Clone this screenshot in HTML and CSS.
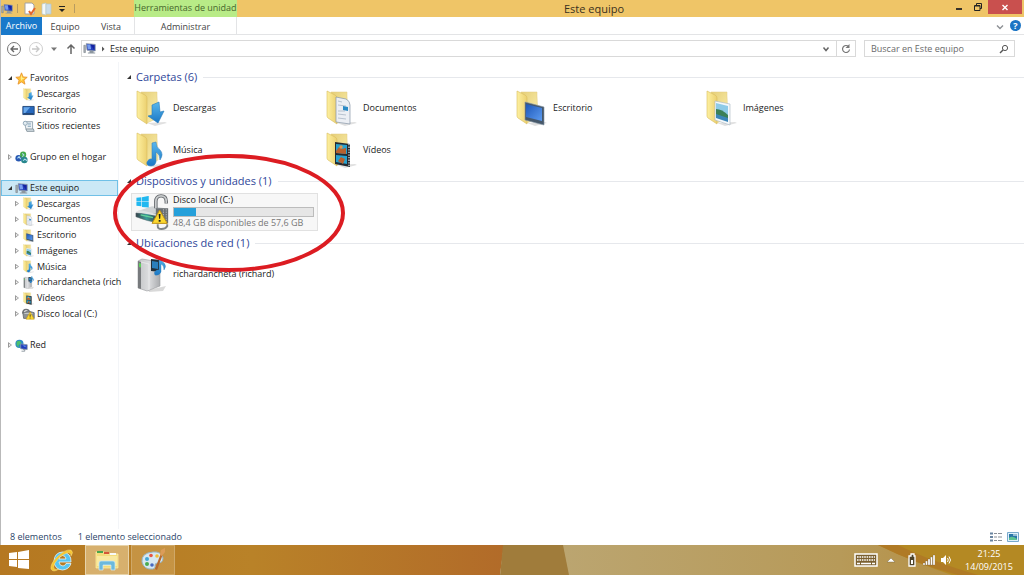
FILE: index.html
```html
<!DOCTYPE html>
<html lang="es">
<head>
<meta charset="utf-8">
<title>Este equipo</title>
<link rel="stylesheet" href="styles.css">
</head>
<body>
<svg class="sprite" aria-hidden="true">
  <defs>
    <linearGradient id="gFront" x1="0" y1="0" x2="1" y2="0"><stop offset="0" stop-color="#fdf0a0"/><stop offset="1" stop-color="#ecd070"/></linearGradient>
    <linearGradient id="gBack" x1="0" y1="0" x2="1" y2="1"><stop offset="0" stop-color="#e6cf78"/><stop offset="1" stop-color="#fbefaf"/></linearGradient>
    <linearGradient id="gBlue" x1="0" y1="0" x2="0" y2="1"><stop offset="0" stop-color="#58b8ee"/><stop offset="1" stop-color="#1a77c4"/></linearGradient>
    <linearGradient id="gScreen" x1="0" y1="0" x2="1" y2="1"><stop offset="0" stop-color="#1d57b8"/><stop offset="1" stop-color="#5d9cf0"/></linearGradient>
    <linearGradient id="gMetal" x1="0" y1="0" x2="1" y2="0"><stop offset="0" stop-color="#c3c5c7"/><stop offset=".5" stop-color="#dcdddf"/><stop offset="1" stop-color="#a9abae"/></linearGradient>
    <linearGradient id="gDrive" x1="0" y1="0" x2="1" y2="0"><stop offset="0" stop-color="#34424a"/><stop offset=".5" stop-color="#3c9c98"/><stop offset="1" stop-color="#3a474f"/></linearGradient>
  </defs>
  <symbol id="folder" viewBox="0 0 32 36">
    <path d="M12 33l18-1 2 1-12 3z" fill="#000" opacity=".12"/>
    <path d="M6 2h16v4l1 22-11 5z" fill="url(#gBack)" stroke="#e0cb80" stroke-width=".5"/>
    <path d="M2 1l8 4q2 1 2 3v26l-9-6q-1-1-1-2z" fill="url(#gFront)" stroke="#d8bc5c" stroke-width=".6"/>
  </symbol>
  <symbol id="down" viewBox="0 0 32 36"><use href="#folder"/><path d="M17 15l7-3 1 10 4-1-6 12-10-7 4-1z" fill="url(#gBlue)" stroke="#2379b8" stroke-width=".6"/></symbol>
  <symbol id="docs" viewBox="0 0 32 36"><use href="#folder"/><path d="M11 7l10 2q4 2 4 6v19l-14-2z" fill="#eceff4" stroke="#8796a8" stroke-width=".7"/><path d="M13 11l4 1m-4 3l8 1m-8 8l8 1m-8 3l8 1m-8-8h7" stroke="#a9b6c5" stroke-width=".8"/><path d="M18 16l5 1v4l-5-1z" fill="#2c8bc6"/></symbol>
  <symbol id="desk" viewBox="0 0 32 36"><use href="#folder"/><path d="M10 12l19 5v18l-19-5z" fill="#46586a" stroke="#8496a5" stroke-width=".6"/><path d="M11 14l16 4v13l-16-4z" fill="url(#gScreen)"/></symbol>
  <symbol id="pics" viewBox="0 0 32 36"><use href="#folder"/><path d="M10 11l15 3v21l-15-5z" fill="#f4f8fb" stroke="#a8b7c1" stroke-width=".6"/><path d="M11 13l12 3v15l-12-4z" fill="#8ecbe8"/><path d="M11 19q6 0 12 6v5l-12-4z" fill="#3b8058"/><path d="M11 24l12 4v4l-12-4z" fill="#3b86b9"/></symbol>
  <symbol id="music" viewBox="0 0 32 36"><use href="#folder"/><path d="M17 11l4-1q0 5 4 8 4 4 0 10 0-6-4-8v10q-1 4-5 4-5 0-4-4 2-4 5-3z" fill="url(#gBlue)" stroke="#3a83bd" stroke-width=".6"/></symbol>
  <symbol id="video" viewBox="0 0 32 36"><use href="#folder"/><path d="M10 10l15 2v23l-15-3z" fill="#242a31"/><path d="M11 12l11 1v9l-11-1zm0 11l11 1v8l-11-2z" fill="#27a2cf"/><path d="M11 19l3-4 3 2 4-1v6l-10-1zm2 10l3-4 4 2-2 5z" fill="#b8602d"/><circle cx="16" cy="15" r="1.7" fill="#e0964e"/><path d="M24 12v22" stroke="#d7dde1" stroke-width="1.3" stroke-dasharray="1.3 1.3"/></symbol>
  <symbol id="win" viewBox="0 0 20 20"><path d="M0 3l8-1v7H0zM9 2l11-2v9H9zM0 10h8v7l-8-1zM9 10h11v9L9 18z" fill="currentColor"/></symbol>
  <symbol id="drive" viewBox="0 0 38 38">
    <path d="M3 18l15-5 14 2-10 7z" fill="#cfd3d5"/><path d="M1 20l22 1v9q-9-1-22-6z" fill="url(#gDrive)" stroke="#59666d" stroke-width=".6"/><path d="M1 19l4-2 18 4-1 2z" fill="#dfe3e4"/><path d="M6 22l13 3" stroke="#62d598" stroke-width="1.4"/>
    <g color="#21b8f0"><use href="#win" x="1" y="2" width="14" height="13"/></g>
    <path d="M22 15V8q0-6 5.500-6T33 8v2" fill="none" stroke="#606468" stroke-width="3.600"/><path d="M22 15V8q0-6 5.500-6T33 8v2" fill="none" stroke="#c8cbcd" stroke-width="1.800"/>
    <rect x="22" y="15" width="13" height="16" fill="#6b7074"/><path d="M33 16v14M30 16v14" stroke="#b3b7b9" stroke-dasharray="1.500 1"/>
    <path d="M24 32v2q0 3 4 3t6-3v-2" fill="none" stroke="#7f8588" stroke-width="2"/>
    <path d="M26 17l8 14H18z" fill="#fbd82f" stroke="#bd8f10"/><path d="M25 21h2l-.4 5h-1.200zM25 27.500h2v1.800h-2z" fill="#222"/>
  </symbol>
  <symbol id="lockdrive" viewBox="0 0 16 16"><path d="M1 8q0-5 4-5t4 4" fill="none" stroke="#707477" stroke-width="2"/><path d="M1 7l7-2 7 2v7H2z" fill="#8d9295" stroke="#63686b"/><path d="M3 8h10" stroke="#d0d4d5"/><path d="M10 6l5 9H5z" fill="#fbd82f" stroke="#c69a18" stroke-width=".7"/><path d="M10 9v3m0 1v1" stroke="#222"/></symbol>
  <symbol id="server" viewBox="0 0 32 36"><path d="M13 34l18-4-3 5-14 1z" fill="#000" opacity=".15"/><path d="M3 5l4-2 18 3v24L12 35l-9-3z" fill="url(#gMetal)" stroke="#989b9e" stroke-width=".6"/><path d="M3 5l3 1v27l-3-1z" fill="#777a7d"/><path d="M4 7l2 .5v4L4 11z" fill="#60d15d"/><path d="M6 6l8 2v26" fill="none" stroke="#eff0f1" stroke-width=".7"/><path d="M16 3l10 1v12l-10-1z" fill="#23303a"/><path d="M17 5l6 1v7l-6-1z" fill="#2b7fbb"/><path d="M26 1q0 4 3 6 3 3 0 7 0-5-3-6v8q-2 4-6 3-2-3 2-5h2V1z" fill="url(#gBlue)" stroke="#347eb7" stroke-width=".4"/></symbol>
  <symbol id="pc" viewBox="0 0 16 16"><path d="M1 4h2v9H1z" fill="#a9b0b7" stroke="#6a7178" stroke-width=".6"/><path d="M4 2l11 1v8L5 10z" fill="#233fbb" stroke="#8993a0"/><path d="M9 3l5 1v6z" fill="#1522a0"/><path d="M5 3l4 0 1 6-4 0z" fill="#779df0"/><path d="M8 11h5v2h2v1H6v-1h2z" fill="#8d979f"/></symbol>
  <symbol id="star" viewBox="0 0 16 16"><path d="M8 1l2 5 5 .5-4 3.500 1.300 5L8 12.300 3.700 15 5 10 1 6.500 6 6z" fill="#ffc437" stroke="#e8902a"/><path d="M8 3l1 4 3 1-3 1-1 2-1-3z" fill="#fff08a"/></symbol>
  <symbol id="screen" viewBox="0 0 16 16"><path d="M1 3h14v10H1z" fill="#2768bd" stroke="#173b6e"/><path d="M2 4h8L4 11H2z" fill="#6aa9eb"/><path d="M2 12h12" stroke="#20344f"/></symbol>
  <symbol id="recent" viewBox="0 0 16 16"><path d="M3 2h10v10H5z" fill="#eef2f5" stroke="#899ba8"/><circle cx="4" cy="4" r="2.500" fill="#e4edf2" stroke="#849eb0"/><path d="M7 4h4M7 6h4M7 8h4" stroke="#86a6bd"/><path d="M5 11h9l1 3H6z" fill="#cfdae0" stroke="#819099"/></symbol>
  <symbol id="home" viewBox="0 0 16 16"><circle cx="4.500" cy="9" r="4" fill="#2858b2"/><circle cx="10" cy="4.500" r="3.800" fill="#44aa4b"/><circle cx="11.500" cy="11" r="4" fill="#28878d"/><path d="M3 9l2-2 2 3M9 3l2 2-2 2M10 12l2-2 3 2" fill="none" stroke="#b1dcf4" stroke-width="1.300"/></symbol>
  <symbol id="net" viewBox="0 0 16 16"><circle cx="5.500" cy="6" r="5" fill="#2a89c7"/><path d="M2 3l4-1 2 3-4 3 2 3-4-3z" fill="#4dc06c"/><path d="M7 6l8 1v6l-8-1z" fill="#1e3dbc" stroke="#8796a5"/><path d="M9 8h4v2z" fill="#719bf1"/><path d="M10 13h2v2H8" fill="none" stroke="#7b8891"/></symbol>
  <symbol id="keyb" viewBox="0 0 24 14"><rect x="1" y="1" width="22" height="12" fill="#7b6030" stroke="#fff" stroke-width="1.500"/><path d="M3 4h18M3 7h18" stroke="#fff" stroke-width="1.600" stroke-dasharray="1.600 .8"/><path d="M3 10.500h3m1 0h10m1 0h3" stroke="#fff" stroke-width="1.500"/></symbol>
</svg>

<div class="window">
  <header class="titlebar">
    <div class="quick">
      <svg class="i12"><use href="#pc"/></svg><span class="sep"></span>
      <button aria-label="Propiedades"><svg viewBox="0 0 12 14" class="qi"><path d="M1 1h7l2 2v9H1z" fill="#fff" stroke="#a3a3a3"/><path d="M5 9l2 3 4-6" fill="none" stroke="#e4662b" stroke-width="2"/></svg></button>
      <button aria-label="Nueva carpeta"><svg viewBox="0 0 12 14" class="qi"><path d="M2 2l4-1v12l-4-1z" fill="#f4f8f8" stroke="#b5c7ca" stroke-width=".7"/><path d="M6 2h5v10H6z" fill="#c9dcea" stroke="#b5c7ca" stroke-width=".7"/></svg></button>
      <button aria-label="Personalizar"><svg viewBox="0 0 8 8" class="i8"><path d="M1 1.500h6" stroke="#222"/><path d="M1 4h6L4 7z" fill="#222"/></svg></button><span class="sep"></span>
    </div>
    <div class="tooltab">Herramientas de unidad</div>
    <h1>Este equipo</h1>
    <button class="wmin" aria-label="Minimizar"><svg viewBox="0 0 10 10" class="i10"><path d="M2 7h6" stroke="#222" stroke-width="1.800"/></svg></button>
    <button class="wmax" aria-label="Restaurar"><svg viewBox="0 0 10 10" class="i10"><path d="M3.500 3V1.500h5v5H7M1.500 3.500H7v5H1.500zM2 4h5" fill="none" stroke="#222"/></svg></button>
    <button class="wclose" aria-label="Cerrar"><svg viewBox="0 0 10 10" class="i10"><path d="M2.500 3l5 5m0-5l-5 5" stroke="#fff" stroke-width="1.400"/></svg></button>
  </header>
  <nav class="tabs">
    <button class="file">Archivo</button><button>Equipo</button><button>Vista</button><button class="admin">Administrar</button>
    <span class="grow"></span>
    <button class="small" aria-label="Expandir"><svg viewBox="0 0 8 8" class="i8"><path d="M1 2.500l3 3 3-3" fill="none" stroke="#8d9095" stroke-width="1.400"/></svg></button>
    <button class="help" aria-label="Ayuda">?</button>
  </nav>
  <div class="address">
    <button class="n22" aria-label="Atrás"><svg viewBox="0 0 16 16" class="i16"><circle cx="8" cy="8" r="6.500" fill="none" stroke="#777"/><path d="M12 8H5m3-3L5 8l3 3" fill="none" stroke="#666" stroke-width="1.400"/></svg></button>
    <button class="n22" aria-label="Adelante"><svg viewBox="0 0 16 16" class="i16"><circle cx="8" cy="8" r="6.500" fill="none" stroke="#cfcfcf"/><path d="M4 8h7M8 5l3 3-3 3" fill="none" stroke="#c8c8c8" stroke-width="1.400"/></svg></button>
    <button class="n14" aria-label="Historial"><svg viewBox="0 0 8 8" class="i8"><path d="M1 2.500h6L4 6z" fill="#777"/></svg></button>
    <button class="n20" aria-label="Subir"><svg viewBox="0 0 10 12" class="up"><path d="M5 11V2M1.500 5.500L5 2l3.500 3.500" fill="none" stroke="#666" stroke-width="1.500"/></svg></button>
    <div class="path">
      <svg class="i13"><use href="#pc"/></svg>
      <svg viewBox="0 0 8 8" class="i8"><path d="M3 1.500v5L5.500 4z" fill="#555"/></svg>
      <a href="#">Este equipo</a>
      <span class="grow"></span>
      <button class="n14" aria-label="Ubicaciones"><svg viewBox="0 0 8 8" class="i8"><path d="M1.500 2.500l2.500 3 2.500-3" fill="none" stroke="#666" stroke-width="1.500"/></svg></button>
      <button class="refresh" aria-label="Actualizar"><svg viewBox="0 0 10 10" class="i10"><path d="M7.500 2.500a3.500 3.500 0 1 0 1 3" fill="none" stroke="#777" stroke-width="1.200"/><path d="M8.500 0v4h-4z" fill="#777"/></svg></button>
    </div>
    <div class="search">
      <input type="search" placeholder="Buscar en Este equipo" aria-label="Buscar en Este equipo">
      <svg viewBox="0 0 10 10" class="i10"><circle cx="6" cy="4" r="2.600" fill="none" stroke="#555"/><path d="M4 6L1 9" stroke="#555" stroke-width="1.500"/></svg>
    </div>
  </div>

  <div class="body">
    <nav class="tree">
      <a href="#" class="top open"><svg class="i13"><use href="#star"/></svg>Favoritos</a>
      <ul>
        <li><a href="#" class="leaf"><svg class="i13"><use href="#down"/></svg>Descargas</a></li>
        <li><a href="#" class="leaf"><svg class="i13"><use href="#screen"/></svg>Escritorio</a></li>
        <li><a href="#" class="leaf"><svg class="i13"><use href="#recent"/></svg>Sitios recientes</a></li>
      </ul>
      <a href="#" class="top gap"><svg class="i13"><use href="#home"/></svg>Grupo en el hogar</a>
      <a href="#" class="top gap open selected"><svg class="i13"><use href="#pc"/></svg>Este equipo</a>
      <ul class="long">
        <li><a href="#"><svg class="i13"><use href="#down"/></svg>Descargas</a></li>
        <li><a href="#"><svg class="i13"><use href="#docs"/></svg>Documentos</a></li>
        <li><a href="#"><svg class="i13"><use href="#desk"/></svg>Escritorio</a></li>
        <li><a href="#"><svg class="i13"><use href="#pics"/></svg>Imágenes</a></li>
        <li><a href="#"><svg class="i13"><use href="#music"/></svg>Música</a></li>
        <li><a href="#"><svg class="i13"><use href="#server"/></svg>richardancheta (rich</a></li>
        <li><a href="#"><svg class="i13"><use href="#video"/></svg>Vídeos</a></li>
        <li><a href="#"><svg class="i13"><use href="#lockdrive"/></svg>Disco local (C:)</a></li>
      </ul>
      <a href="#" class="top gap"><svg class="i13"><use href="#net"/></svg>Red</a>
    </nav>
    <main class="content">
      <h2>Carpetas (6)</h2>
      <div class="items">
        <a href="#"><svg><use href="#down"/></svg>Descargas</a>
        <a href="#"><svg><use href="#docs"/></svg>Documentos</a>
        <a href="#"><svg><use href="#desk"/></svg>Escritorio</a>
        <a href="#"><svg><use href="#pics"/></svg>Imágenes</a>
        <a href="#"><svg><use href="#music"/></svg>Música</a>
        <a href="#"><svg><use href="#video"/></svg>Vídeos</a>
      </div>
      <h2>Dispositivos y unidades (1)</h2>
      <a href="#" class="disk">
        <svg><use href="#drive"/></svg>
        <span class="info"><span>Disco local (C:)</span><span class="bar"><span class="used"></span></span><span class="free">48,4 GB disponibles de 57,6 GB</span></span>
      </a>
      <h2 class="third">Ubicaciones de red (1)</h2>
      <div class="items"><a href="#"><svg><use href="#server"/></svg>richardancheta (richard)</a></div>
      <svg class="mark" viewBox="0 0 232 118"><ellipse cx="116" cy="59" rx="114" ry="57" fill="none" stroke="#dc1c22" stroke-width="4"/></svg>
    </main>
  </div>
  <footer class="status"><span>8 elementos</span><span>1 elemento seleccionado</span><span class="grow"></span>
    <button aria-label="Detalles"><svg viewBox="0 0 12 10" class="view"><path d="M0 1.500h3M0 5h3M0 8.500h3" stroke="#6984a0" stroke-width="1.800"/><path d="M4 1.500h3m1 0h4M4 5h3m1 0h4M4 8.500h3m1 0h4" stroke="#8a8f96"/></svg></button>
    <button class="big" aria-label="Iconos grandes"><svg viewBox="0 0 12 10" class="view"><path d="M.5.500h11v9H.5z" fill="#dff1fb" stroke="#78a9cc"/><path d="M2 2h8v6H2z" fill="#2976a8"/><path d="M2 6q3-3 8 1v1H2z" fill="#5cc391"/><path d="M6 3h4" stroke="#fff"/></svg></button>
  </footer>
</div>

<div class="taskbar">
  <svg class="wall" viewBox="0 0 1024 30" preserveAspectRatio="none">
    <defs><linearGradient id="gW" x1="0" x2="1"><stop offset="0" stop-color="#b57821"/><stop offset=".5" stop-color="#b98228"/><stop offset="1" stop-color="#b26b29"/></linearGradient><linearGradient id="gT" x1="0" x2="1"><stop offset="0" stop-color="#bba570"/><stop offset=".6" stop-color="#b79a59"/><stop offset="1" stop-color="#b48a39"/></linearGradient></defs>
    <path d="M0 0h504l-4 30H0z" fill="url(#gW)"/>
    <path d="M503 0h62l6 30h-71z" fill="#a07c3b"/>
    <path d="M563 0h461v30H569z" fill="url(#gT)"/>
    <path d="M878 0h146v30H952Q916 18 878 0z" fill="#b48923"/>
    <path d="M878 0q38 19 80 30h20Q930 16 898 0z" fill="#b07a25"/>
  </svg>
  <button class="tb start" aria-label="Inicio"><svg><use href="#win"/></svg></button>
  <button class="tb ie" aria-label="Internet Explorer"><svg viewBox="0 0 24 24"><path d="M21 15.500q-2 6-8.500 6.500-8-.5-8.500-9 .5-8.500 8.500-9Q21.500 5 21 14H9q.5 4 4 4 2 0 3-2.500zM9 11h7q-.5-3.500-3.500-3.500T9 11z" fill="#58c6f1" stroke="#e3f5fc" stroke-width=".8"/><path d="M5 15q-4 8 4 6-6 4-8 0-1-5 6-12 8-8 14-7 3 2 0 6 0-4-4-3Q10 7 5 15z" fill="#f7c632" stroke="#fbe99a" stroke-width=".4"/></svg></button>
  <button class="tb active" aria-label="Explorador de archivos"><svg viewBox="0 0 24 24"><path d="M1 4h8l1 2h13v14H1z" fill="#f3dc7a" stroke="#fff1ae" stroke-width=".7"/><path d="M2 3h6v2H2z" fill="#48a54b"/><path d="M9 4h5v2H9z" fill="#d55537"/><path d="M15 5h6v2h-6z" fill="#f8faf8"/><path d="M2 8h20v10H2z" fill="#f9e99f"/><path d="M4 22v-7q0-2 2-2h12q2 0 2 2v7h-4v-5H8v5z" fill="#6cb9dc" stroke="#d0edf9" stroke-width=".7"/></svg></button>
  <button class="tb running" aria-label="Paint"><svg viewBox="0 0 24 24"><path d="M12 4Q0 5 1 14q2 8 11 7 3-1 2-4 0-2 3-2 5 0 5-5-2-7-10-6z" fill="#d7e8f1" stroke="#97b6c7"/><circle cx="6" cy="11" r="2" fill="#41a6d9"/><circle cx="10" cy="7.500" r="1.800" fill="#e65744"/><circle cx="16" cy="8" r="1.800" fill="#f1bd34"/><circle cx="6" cy="16" r="2" fill="#4bab50"/><circle cx="11" cy="17" r="1.800" fill="#4969bf"/><path d="M20 5l2 1-6 16-2-1z" fill="#b76a2e"/><path d="M19 7l1-5 4-2v4l-3 4z" fill="#dc9c58"/></svg></button>
  <span class="grow"></span>
  <button class="tray kb" aria-label="Teclado"><svg><use href="#keyb"/></svg></button>
  <button class="tray" aria-label="Mostrar iconos ocultos"><svg viewBox="0 0 8 8" class="i8"><path d="M0 6L4 2l4 4z" fill="#fff" stroke="#6b5a38" stroke-width=".4"/></svg></button>
  <button class="tray bat" aria-label="Batería"><svg viewBox="0 0 10 14" class="tr"><path d="M2 3h2V1h3v2h1v10H2z" fill="#4d4228" stroke="#fff" stroke-width="1.300"/><path d="M4 7h2v4H4z" fill="#fff"/></svg></button>
  <button class="tray" aria-label="Red"><svg viewBox="0 0 12 12" class="i12"><path d="M0 11V9h2v2zM2.500 11V7h2v4zM5 11V5h2v6zM7.500 11V3h2v8zM10 11V1h2v10z" fill="#fff" stroke="#655536" stroke-width=".3"/></svg></button>
  <button class="tray" aria-label="Volumen"><svg viewBox="0 0 12 12" class="i12"><path d="M1 4h2l3-3v10L3 8H1z" fill="#fff"/><path d="M7.500 4q1.500 2 0 4M9 2.500q3 3.500 0 7" fill="none" stroke="#fff"/></svg></button>
  <time class="clock"><span>21:25</span><span>14/09/2015</span></time>
</div>
</body>
</html>
```
FILE: styles.css
```css
* { box-sizing: border-box; }
body {
  margin: 0;
  min-height: 100vh;
  display: flex;
  flex-direction: column;
  background: #fff;
  color: #1c1c1c;
  font: 9px/12px "Open Sans", "Noto Sans", sans-serif;
  white-space: nowrap;
}
a { color: inherit; text-decoration: none; }
button { margin: 0; padding: 0; border: 0; background: none; color: inherit; font: inherit; display: flex; align-items: center; justify-content: center; }
svg { display: block; flex: none; }
.sprite { position: absolute; width: 0; height: 0; }
.grow { flex: 1; }
.i8 { width: 8px; height: 8px; }
.i10 { width: 10px; height: 10px; }
.i12 { width: 12px; height: 12px; }
.i13 { width: 13px; height: 13px; }
.i16 { width: 16px; height: 16px; }
.up { width: 10px; height: 12px; }

.window { flex: 1; display: flex; flex-direction: column; border-left: 1px solid #b9b9b9; }

.titlebar { display: flex; height: 17px; background: #efc567; }
.quick { width: 133px; display: flex; align-items: center; }
.quick .sep { width: 1px; height: 9px; margin: 0 4px; background: #b79b60; }
.quick button { width: 16px; height: 17px; }
.quick .qi { width: 12px; height: 14px; }
.tooltab { width: 103px; text-align: center; line-height: 16px; background: #b8eb87; color: #46662c; }
h1 { flex: 1; margin: 0; font-size: 11px; line-height: 17px; font-weight: 400; text-align: center; color: #3a3020; }
.wmin { width: 16px; height: 14px; }
.wmax { width: 21px; height: 14px; }
.wclose { width: 34px; height: 14px; margin-right: 2px; background: #c9504e; }

.tabs { display: flex; height: 18px; border-bottom: 1px solid #e3e4e6; color: #444; }
.tabs button { width: 46px; height: 18px; padding-top: 1px; }
.tabs .file { width: 41px; padding: 0; background: #1979ca; color: #fff; }
.tabs .admin { width: 103px; border: solid #e3e4e6; border-width: 0 1px; }
.tabs .small { width: 16px; }
.tabs .help { width: 11px; height: 11px; margin: 3px 3px 0 2px; padding: 0; border-radius: 50%; background: #1b74c4; color: #fff; font-weight: 700; }

.address { display: flex; align-items: center; height: 27px; padding: 0 9px 0 2px; }
.n22 { width: 22px; }
.n14 { width: 14px; }
.n20 { width: 20px; }
.path { flex: 1; display: flex; align-items: center; gap: 3px; height: 17px; padding-left: 1px; border: 1px solid #d9d9d9; }
.refresh { width: 19px; height: 15px; border-left: 1px solid #d9d9d9; }
.search { width: 151px; height: 17px; margin-left: 8px; padding: 0 5px 0 6px; display: flex; align-items: center; border: 1px solid #d9d9d9; }
.search input { flex: 1; min-width: 0; padding: 0; border: 0; outline: 0; background: none; font: inherit; color: #444; }
.search input::placeholder { color: #6a6a6a; opacity: 1; }

.body { flex: 1; display: flex; }
.tree { width: 118px; padding-top: 8px; border-right: 1px solid #f3f5f8; }
.tree ul { list-style: none; margin: 0; padding: 0; }
.tree .long { display: grid; grid-auto-rows: 1fr; height: 126px; }
.tree a { display: flex; align-items: center; gap: 2px; height: 16px; padding-left: 14px; }
.tree .long a { height: 15px; }
.tree a.top { padding-left: 7px; }
.tree a.gap { margin-top: 15px; }
.tree a::before { content: ""; width: 4px; height: 6px; margin-right: 1px; flex: none; background: #9a9a9a; clip-path: polygon(0 0, 100% 50%, 0 100%, 0 0, 1px 2px, 1px 4px, 3px 3px, 1px 2px); }
.tree a.open::before { height: 4px; background: #333; clip-path: polygon(100% 0, 100% 100%, 0 100%); }
.tree a.leaf::before { visibility: hidden; }
.tree a.selected { padding-left: 6px; border: 1px solid #70c0e7; background: #cbe8f6; }

.content { position: relative; flex: 1; min-width: 0; padding: 7px 0 0 12px; }
h2 { display: flex; align-items: center; margin: 2px 0; height: 16px; font-size: 11px; line-height: 16px; font-weight: 400; color: #30479a; }
.content h2:first-child { margin-top: 0; }
h2::before { content: ""; width: 4px; height: 4px; margin: 0 5px 0 -4px; background: #333; clip-path: polygon(100% 0, 100% 100%, 0 100%); }
h2::after { content: ""; flex: 1; height: 1px; margin-left: 6px; background: #e6e8ec; }
.third { margin-top: 4px; }
.items { display: grid; grid-template-columns: repeat(auto-fill, 190px); padding-left: 4px; }
.items a { display: flex; align-items: center; gap: 6px; height: 42px; }
.items svg { width: 32px; height: 36px; }
.disk { display: flex; width: 187px; height: 38px; margin-top: 4px; padding-left: 2px; border: 1px solid #e1e1e1; background: #f7f7f7; }
.disk svg { width: 38px; height: 36px; }
.info { flex: 1; display: flex; flex-direction: column; padding-right: 3px; margin-left: 1px; }
.bar { height: 10px; margin-top: 1px; border: 1px solid #bcbcbc; background: #e6e6e6; }
.used { display: block; width: 16%; height: 8px; background: #26a0da; }
.free { color: #777; }
.mark { position: absolute; left: -6px; top: 92px; width: 232px; height: 118px; pointer-events: none; }

.status { display: flex; align-items: center; gap: 16px; height: 16px; padding: 0 5px 0 9px; color: #2b4468; }
.status .big { margin-left: -11px; }
.view { width: 12px; height: 10px; }

.taskbar { position: relative; display: flex; align-items: center; height: 30px; color: #fff; }
.wall { position: absolute; inset: 0; width: 100%; height: 100%; z-index: -1; }
.tb { width: 43px; height: 30px; }
.tb svg { width: 24px; height: 24px; }
.start { width: 38px; }
.start svg { width: 20px; height: 20px; }
.ie { width: 47px; }
.active { width: 44px; border: 1px solid #e7d3aa; background: rgba(255, 240, 200, .45); }
.running { width: 44px; margin-left: 2px; border: 1px solid #cfa868; background: rgba(255, 235, 190, .2); }
.tray { width: 17px; height: 30px; }
.kb { width: 24px; margin-right: 4px; }
.bat { margin-left: 4px; }
.kb svg { width: 24px; height: 14px; }
.tr { width: 10px; height: 14px; }
.clock { display: flex; flex-direction: column; text-align: center; width: 70px; line-height: 13px; }
```
